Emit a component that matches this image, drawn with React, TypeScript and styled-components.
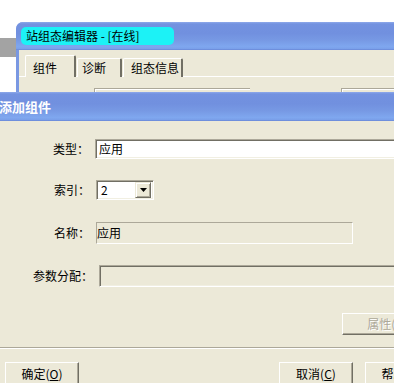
import React from "react";
import styled, { createGlobalStyle } from "styled-components";

const GlobalStyle = createGlobalStyle`
  html, body { margin: 0; padding: 0; background: #ffffff; overflow: hidden; }
  * { box-sizing: border-box; }
`;

const FONT = `"Noto Sans CJK SC", "Liberation Sans", sans-serif`;
const BEIGE = "#ece9d8";
const SHADOW = "#716f64";
const MID = "#aca899";
const LIGHT = "#f1efe2";

const TITLE_GRADIENT = `linear-gradient(to bottom,
  #8ea9ea 0px, #7392e0 2px, #7190df 40%, #7799e4 65%, #7fa7ef 88%, #7aa0ea 95%, #6886d6 100%)`;

const Desktop = styled.div`
  position: relative;
  width: 394px;
  height: 383px;
  overflow: hidden;
  background: #ffffff;
  font-family: ${FONT};
  font-size: 12px;
  color: #000;
`;

const BehindWindow = styled.div`
  position: absolute;
  left: 0;
  top: 38px;
  width: 16px;
  height: 19px;
  background: #a3a3a3;
`;

const EditorWindow = styled.div`
  position: absolute;
  left: 16px;
  top: 22px;
  width: 440px;
  height: 120px;
  border-radius: 7px 7px 0 0;
  background: #7a98e2;
  padding-left: 3px;
  display: flex;
  flex-direction: column;
  overflow: hidden;
`;

const EditorTitleBar = styled.div`
  height: 28px;
  margin-left: -3px;
  padding-left: 5px;
  display: flex;
  align-items: center;
  background: ${TITLE_GRADIENT};
`;

const OnlineCaption = styled.div`
  width: 153px;
  height: 18px;
  border-radius: 5px;
  background: #1cf2f6;
  padding-left: 5px;
  display: flex;
  align-items: center;
  line-height: 14px;
  white-space: nowrap;
`;

const EditorBody = styled.div`
  flex: 1;
  background: ${BEIGE};
  display: flex;
  flex-direction: column;
  padding-top: 5px;
`;

const TabStrip = styled.div`
  display: flex;
  align-items: flex-end;
  padding-left: 6px;
  gap: 1px;
  height: 22px;
`;

const Tab = styled.div<{ $w: number; $pad: number; $active?: boolean }>`
  width: ${(p) => p.$w}px;
  height: ${(p) => (p.$active ? 22 : 19)}px;
  padding-left: ${(p) => p.$pad}px;
  padding-top: ${(p) => (p.$active ? 5 : 2)}px;
  line-height: 14px;
  border-top: 1px solid #ffffff;
  border-left: 1px solid #ffffff;
  border-right: 2px solid ${SHADOW};
  border-radius: 2px 2px 0 0;
  background: ${BEIGE};
  white-space: nowrap;
  position: relative;
  z-index: ${(p) => (p.$active ? 2 : 1)};
`;

const TabPanel = styled.div`
  flex: 1;
  border-top: 1px solid #ffffff;
  margin-top: -1px;
  padding: 11px 0 0 75px;
  display: flex;
  gap: 91px;
`;

const GroupFrame = styled.div<{ $w: number }>`
  width: ${(p) => p.$w}px;
  height: 40px;
  border-top: 1px solid ${MID};
  border-left: 1px solid ${MID};
  box-shadow: inset 1px 1px 0 #ffffff;
`;

const Dialog = styled.div`
  position: absolute;
  left: -8px;
  top: 92px;
  width: 480px;
  height: 320px;
  display: flex;
  flex-direction: column;
  background: ${BEIGE};
`;

const DialogTitleBar = styled.div`
  height: 29px;
  flex: none;
  padding-left: 7px;
  display: flex;
  align-items: center;
  background: ${TITLE_GRADIENT};
  color: #ffffff;
  font-weight: bold;
  font-size: 13px;
  line-height: 16px;
`;

const DialogBody = styled.div`
  flex: 1;
  display: flex;
  flex-direction: column;
  padding: 18px 0 0 8px;
`;

const FieldRow = styled.div<{ $top: number }>`
  display: flex;
  align-items: center;
  margin-top: ${(p) => p.$top}px;
  gap: 6px;
`;

const FieldLabel = styled.div<{ $w: number }>`
  width: ${(p) => p.$w}px;
  text-align: right;
  line-height: 14px;
  white-space: nowrap;
`;

const SunkenEdit = styled.div<{ $w: number; $h: number; $disabled?: boolean }>`
  width: ${(p) => p.$w}px;
  height: ${(p) => p.$h}px;
  border-style: solid;
  border-width: 1px;
  border-color: ${MID} #ffffff #ffffff ${MID};
  box-shadow: inset 1px 1px 0 ${SHADOW}, inset -1px -1px 0 ${LIGHT};
  background: ${(p) => (p.$disabled ? BEIGE : "#ffffff")};
  padding: 0 0 0 3px;
  display: flex;
  align-items: center;
  line-height: 14px;
`;

const FlatEdit = styled.div<{ $w: number }>`
  width: ${(p) => p.$w}px;
  height: 22px;
  border-style: solid;
  border-width: 1px;
  border-color: ${MID} #ffffff #ffffff ${MID};
  background: ${BEIGE};
  display: flex;
  align-items: center;
  line-height: 14px;
`;

const Combo = styled.div`
  width: 58px;
  height: 20px;
  border-style: solid;
  border-width: 1px;
  border-color: ${MID} #ffffff #ffffff ${MID};
  box-shadow: inset 1px 1px 0 ${SHADOW}, inset -1px -1px 0 ${LIGHT};
  background: #ffffff;
  padding: 2px 2px 2px 4px;
  display: flex;
  align-items: center;
  justify-content: space-between;
  line-height: 14px;
`;

const ComboArrow = styled.div`
  width: 16px;
  height: 16px;
  background: ${BEIGE};
  border-style: solid;
  border-width: 1px;
  border-color: ${BEIGE} ${SHADOW} ${SHADOW} ${BEIGE};
  box-shadow: inset 1px 1px 0 #ffffff, inset -1px -1px 0 ${MID};
  display: flex;
  align-items: center;
  justify-content: center;
`;

const PushButton = styled.div<{ $w: number; $h: number; $disabled?: boolean; $pushRight?: boolean }>`
  width: ${(p) => p.$w}px;
  height: ${(p) => p.$h}px;
  flex: none;
  margin-left: ${(p) => (p.$pushRight ? "auto" : "0")};
  background: ${BEIGE};
  border-style: solid;
  border-width: 1px;
  border-color: #ffffff ${SHADOW} ${SHADOW} #ffffff;
  box-shadow: inset -1px -1px 0 ${MID};
  display: flex;
  align-items: center;
  justify-content: center;
  line-height: 14px;
  white-space: nowrap;
  color: ${(p) => (p.$disabled ? MID : "#000")};
  text-shadow: ${(p) => (p.$disabled ? "1px 1px 0 #ffffff" : "none")};
`;

const PropertyRow = styled.div`
  display: flex;
  margin-top: 26px;
  padding-left: 342px;
`;

const Separator = styled.div`
  margin: 12px 0 0 -8px;
  height: 2px;
  border-top: 1px solid ${MID};
  border-bottom: 1px solid #ffffff;
`;

const ButtonRow = styled.div`
  display: flex;
  gap: 12px;
  width: 439px;
  padding-left: 5px;
  margin-top: 13px;
`;

export default function App() {
  return (
    <>
      <GlobalStyle />
      <Desktop>
        <BehindWindow />
        <EditorWindow>
          <EditorTitleBar>
            <OnlineCaption>站组态编辑器 - [在线]</OnlineCaption>
          </EditorTitleBar>
          <EditorBody>
            <TabStrip>
              <Tab $w={51} $pad={7} $active>
                组件
              </Tab>
              <Tab $w={45} $pad={4}>
                诊断
              </Tab>
              <Tab $w={60} $pad={7}>
                组态信息
              </Tab>
            </TabStrip>
            <TabPanel>
              <GroupFrame $w={164} />
              <GroupFrame $w={120} />
            </TabPanel>
          </EditorBody>
        </EditorWindow>

        <Dialog>
          <DialogTitleBar>添加组件</DialogTitleBar>
          <DialogBody>
            <FieldRow $top={0}>
              <FieldLabel $w={89}>类型：</FieldLabel>
              <SunkenEdit $w={330} $h={20}>
                应用
              </SunkenEdit>
            </FieldRow>
            <FieldRow $top={21}>
              <FieldLabel $w={90}>索引：</FieldLabel>
              <Combo>
                <span>2</span>
                <ComboArrow>
                  <svg width="7" height="4" viewBox="0 0 7 4">
                    <path d="M0 0H7L3.5 4Z" fill="#000" />
                  </svg>
                </ComboArrow>
              </Combo>
            </FieldRow>
            <FieldRow $top={22}>
              <FieldLabel $w={90}>名称：</FieldLabel>
              <FlatEdit $w={257}>应用</FlatEdit>
            </FieldRow>
            <FieldRow $top={21}>
              <FieldLabel $w={93}>参数分配：</FieldLabel>
              <SunkenEdit $w={330} $h={22} $disabled />
            </FieldRow>
            <PropertyRow>
              <PushButton $w={100} $h={22} $disabled>
                属性(<u>P</u>)...
              </PushButton>
            </PropertyRow>
            <Separator />
            <ButtonRow>
              <PushButton $w={74} $h={23}>
                确定(<u>O</u>)
              </PushButton>
              <PushButton $w={74} $h={23} $pushRight>
                取消(<u>C</u>)
              </PushButton>
              <PushButton $w={74} $h={23}>
                帮助(<u>H</u>)
              </PushButton>
            </ButtonRow>
          </DialogBody>
        </Dialog>
      </Desktop>
    </>
  );
}
